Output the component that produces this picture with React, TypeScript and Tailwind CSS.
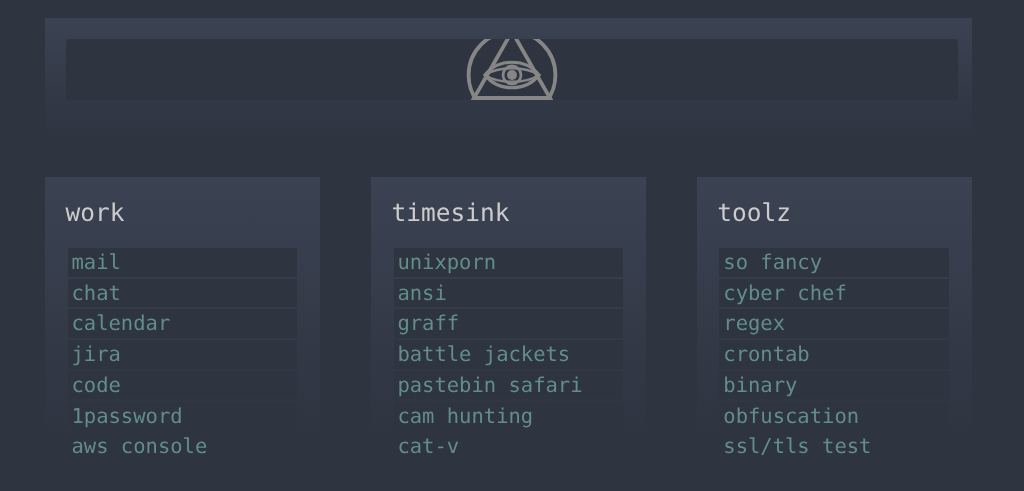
const columns = [
  { title: "work", items: ["mail", "chat", "calendar", "jira", "code", "1password", "aws console"] },
  { title: "timesink", items: ["unixporn", "ansi", "graff", "battle jackets", "pastebin safari", "cam hunting", "cat-v"] },
  { title: "toolz", items: ["so fancy", "cyber chef", "regex", "crontab", "binary", "obfuscation", "ssl/tls test"] },
];

function Logo() {
  return (
    <svg width="92" height="92" viewBox="0 0 92 92" fill="none" stroke="#868686" className="shrink-0 mt-[11px] blur-[0.4px]">
      <circle cx="46" cy="46" r="43.4" strokeWidth="3.8" />
      <path d="M46 2.5 L84 69 H8 Z" strokeWidth="3.8" strokeLinejoin="miter" />
      <path d="M19 46 C32 29 60 29 73 46 C60 63 32 63 19 46 Z" strokeWidth="3.2" />
      <path d="M19 46 C32 37 60 37 73 46 C60 55 32 55 19 46 Z" strokeWidth="2.4" />
      <circle cx="46" cy="46" r="9" strokeWidth="2.8" />
      <circle cx="46" cy="46" r="5" fill="#868686" stroke="none" />
    </svg>
  );
}

export default function App() {
  return (
    <div className="h-[491px] overflow-hidden bg-[#2e3440] pt-[18px] pl-[45px] pr-[52.2px] font-['DejaVu_Sans_Mono',monospace] [text-rendering:geometricPrecision]">
      <div className="h-[120px] bg-gradient-to-b from-[#3b4252] to-[#2e3440] pl-[21px] pr-[14px] pt-[21px]">
        <div className="h-[61px] rounded-[4px] bg-[#2e3440] overflow-hidden flex justify-center items-center">
          <Logo />
        </div>
      </div>
      <div className="mt-[39px] flex justify-between">
        {columns.map((c) => (
          <div key={c.title} className="w-[275px] h-[262px] bg-gradient-to-b from-[#3b4252] to-[#2e3440] pt-[21px] px-[20px]">
            <h2 className="text-[24.5px] leading-[30px] text-[#cccccc] pl-[0.5px]"><span className="inline-block blur-[0.3px]">{c.title}</span></h2>
            <ul className="mt-[20px] mx-[2.6px]">
              {c.items.map((i) => (
                <li key={i} className="h-[28.5px] mb-[2.22px] bg-[#2e3440] pl-[3.9px] text-[20.5px] leading-[28.6px] text-[#628e8a] whitespace-nowrap"><span className="inline-block blur-[0.3px]">{i}</span></li>
              ))}
            </ul>
          </div>
        ))}
      </div>
    </div>
  );
}
